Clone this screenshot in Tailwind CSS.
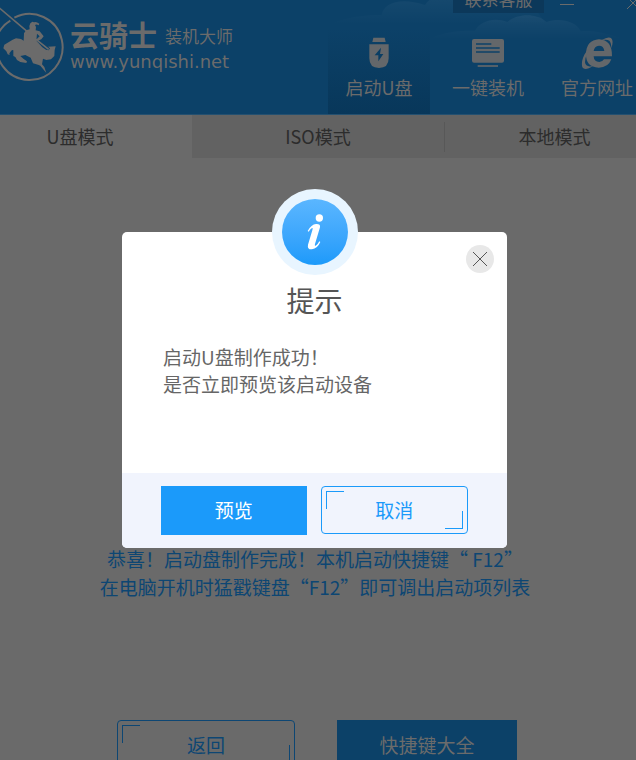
<!DOCTYPE html>
<html lang="zh-CN">
<head>
  <meta charset="UTF-8" />
  <meta name="viewport" content="width=device-width, initial-scale=1" />
  <title>云骑士装机大师</title>
  <script src="https://cdn.jsdelivr.net/npm/@tailwindcss/browser@4"></script>
</head>
<body class="relative h-screen overflow-hidden bg-[#6a6a6a] font-['Noto_Sans_CJK_SC',sans-serif] text-[#2c2c2c]">

<!-- HEADER -->
<header class="relative flex h-[115px] overflow-hidden border-b border-[#245070] bg-[#0c4168] text-[#6b6b6b]">

  <!-- clouds -->
  <svg class="absolute right-0 top-0" width="316" height="114" viewBox="0 0 948 342" aria-hidden="true">
    <defs>
      <linearGradient id="cloud" x1="0" y1="0" x2="0" y2="1">
        <stop offset="0" stop-color="#fff" stop-opacity=".05" />
        <stop offset=".9" stop-color="#fff" stop-opacity="0" />
      </linearGradient>
    </defs>
    <path fill="url(#cloud)" d="M0 75C60 68 80 45 185 45C190 10 240-10 315 15C330-10 370-25 420-25H560C620-10 650 30 680 75V85H0z" />
    <path fill="url(#cloud)" d="M340 110C400 90 430 92 465 92C480 62 525 50 562 66C590 40 650 38 680 66C720 52 770 65 782 94C830 90 850 100 948 125H340z" />
  </svg>

  <!-- logo -->
  <div class="relative flex">
    <svg class="h-[82px] w-16" viewBox="0 0 192 246" role="img" aria-label="云骑士">
      <g fill="none" stroke="#6b6b6b">
        <path stroke-width="6" d="M43 53A99 99 0 1 1 -6 112M-3 96A99 99 0 0 1 31 62" />
        <path stroke-width="5" d="M-3 23L82 95M108 118L146 148" />
      </g>
      <path fill="#6b6b6b" d="M88 78L91 70L97 65L102 67Q108 63 118 71L116 76Q109 71 105 75L108 81L107 91L119 94L131 109L124 118L112 123L108 119L119 109L111 101L109 122L127 142L138 149L146 151L150 145L144 140L167 139L164 150L163 168L153 178L139 180L129 176L126 193L133 201L139 219L121 197L114 194L99 190L92 173L76 165L61 168L71 177L81 184L79 189L61 186L51 180L46 171L40 168L40 151L36 150L28 160L29 165L23 163L19 154L10 145L13 134L23 128L38 119L48 115L63 117L71 122L72 100L78 91L89 88z" />
    </svg>
    <div class="pt-4 pl-[6px]">
      <div class="flex items-center gap-2 leading-8">
        <span class="text-[29px] font-bold">云骑士</span>
        <span class="pt-1 text-[17px]">装机大师</span>
      </div>
      <div class="font-['DejaVu_Sans',sans-serif] text-[18px] leading-5">www.yunqishi.net</div>
    </div>
  </div>

  <!-- window buttons -->
  <div class="absolute -top-4 -right-[6px] flex h-[29px] items-center">
    <button class="mr-4 h-full w-[91px] bg-[#0c385a] text-[17px]">联系客服</button>
    <button class="mr-[50px] h-full w-4 pt-[11px]" aria-label="最小化"><span class="block h-px w-[14px] bg-[#6b6b6b]"></span></button>
    <button class="h-full w-4" aria-label="关闭">
      <svg class="mt-2" width="14" height="14" viewBox="0 0 14 14" stroke="#6b6b6b"><path d="M1 1L13 13M13 1L1 13" /></svg>
    </button>
  </div>

  <!-- nav -->
  <nav class="relative -mr-3 ml-auto flex gap-[7px] pt-7 text-[18px] leading-6">
    <a href="#" class="-mt-7 flex w-[102px] flex-col items-center gap-1.5 bg-linear-to-b from-transparent from-25% to-[#08375a] pt-[37px]">
      <svg width="32" height="32" viewBox="0 0 96 96" fill="#64676a">
        <path d="M31 2H65L68 15H28z" />
        <path d="M19 22H77V64Q77 93 48 93Q19 93 19 64zM54 32L35 55H46V73L61 51H51z" fill-rule="evenodd" />
      </svg>
      <span>启动U盘</span>
    </a>
    <a href="#" class="flex w-[102px] flex-col items-center gap-1.5 pt-[9px]">
      <svg width="32" height="32" viewBox="0 0 96 96">
        <rect y="6" width="96" height="71" rx="6" fill="#64676a" />
        <path d="M12 21H58M12 33H83M12 45H83" stroke="#0c4168" stroke-width="5" />
        <path d="M17 87H78" stroke="#64676a" stroke-width="5" />
      </svg>
      <span>一键装机</span>
    </a>
    <a href="#" class="flex w-[102px] flex-col items-center gap-1.5 pt-[9px]">
      <svg width="32" height="32" viewBox="0 0 96 96" fill="#64676a">
        <path d="M93 58H38Q39 75 55 75Q64 75 69 67H91Q82 92 53 92Q14 90 15 51Q16 9 54 7Q94 9 93 58zM38 42H70Q68 26 54 26Q40 27 38 42z" fill-rule="evenodd" />
        <path d="M62 9Q84-4 92 5Q98 14 91 34Q91 17 85 11Q78 6 62 9zM36 87Q12 102 4 91C-3 66 19 32 45 16Q12 49 12 76Q14 92 36 87z" />
      </svg>
      <span>官方网址</span>
    </a>
  </nav>
</header>

<!-- TABS -->
<div role="tablist" class="grid h-[43px] grid-cols-[192fr_252fr_192fr] text-[18px]">
  <button role="tab" aria-selected="true" class="pr-8">U盘模式</button>
  <button role="tab" aria-selected="false" class="bg-[#626262]">ISO模式</button>
  <button role="tab" aria-selected="false" class="flex items-center bg-[#626262]">
    <span class="h-[30px] w-px bg-[#585858]"></span>
    <span class="flex-1 pl-7">本地模式</span>
  </button>
</div>

<!-- RESULT -->
<main class="pt-[387px] pr-[2px] text-[19px]">
  <p class="pr-1 text-center leading-7 text-[#0d4673]">恭喜！启动盘制作完成！本机启动快捷键“ F12”<br />在电脑开机时猛戳键盘“F12”即可调出启动项列表</p>
  <div class="flex justify-center gap-[42px] pt-[119px]">
    <button class="relative h-[50px] w-[178px] rounded-sm border border-[#0d4673] text-[#0d4673]">
      返回
      <span class="absolute top-1 left-1 size-[18px] border-t border-l border-[#0d4673]"></span>
      <span class="absolute right-1 bottom-1 size-5 border-r border-b border-[#0d4673]"></span>
    </button>
    <button class="h-[50px] w-[180px] bg-[#0c4168] text-[#6b6b6b]">快捷键大全</button>
  </div>
</main>

<!-- DIALOG -->
<div class="absolute inset-0 flex items-start justify-center pt-[232px] pr-[7px]">
  <div role="dialog" aria-labelledby="dialogTitle" class="relative w-[385px] rounded-[5px] bg-white text-[#555]">
    <div class="absolute inset-x-0 -top-[43px] flex justify-center">
      <div class="flex size-[86px] items-center justify-center rounded-full bg-[#e8f5ff]">
        <div class="flex size-[66px] items-center justify-center rounded-full bg-linear-to-b from-[#5ab6ff] to-[#1b9afa]">
          <svg width="18" height="36" viewBox="0 0 54 108" fill="#fff">
            <circle cx="40" cy="12" r="11" />
            <path d="M5 51Q16 31 30 30Q44 29 42 40L27 90Q25 97 29 95Q35 92 40 82L43 84Q34 104 18 106Q3 107 6 92L19 49Q22 40 17 43Q13 45 8 53z" />
          </svg>
        </div>
      </div>
    </div>
    <button class="absolute top-[13px] right-[13px] flex size-7 items-center justify-center rounded-full bg-[#e8e8e8]" aria-label="关闭">
      <svg width="14" height="14" viewBox="0 0 14 14" stroke="#555"><path d="M0 0L14 14M14 0L0 14" /></svg>
    </button>

    <h2 id="dialogTitle" class="pt-12 text-center text-[28px] leading-10">提示</h2>
    <p class="h-[153px] px-[41px] pt-[23px] text-[19px] leading-[27px] text-[#666]">启动U盘制作成功！<br />是否立即预览该启动设备</p>

    <div class="flex h-[75px] items-start gap-[14px] rounded-b-[5px] bg-[#f1f4fd] px-[39px] pt-[13px] text-[19px]">
      <button class="h-[49px] flex-1 bg-[#1b9afa] text-white">预览</button>
      <button class="relative h-12 flex-1 rounded-sm border border-[#1b9afa] text-[#1b9afa]">
        取消
        <span class="absolute top-1 left-1 size-[18px] border-t border-l border-[#1b9afa]"></span>
        <span class="absolute right-1 bottom-1 size-[18px] border-r border-b border-[#1b9afa]"></span>
      </button>
    </div>
  </div>
</div>

</body>
</html>
